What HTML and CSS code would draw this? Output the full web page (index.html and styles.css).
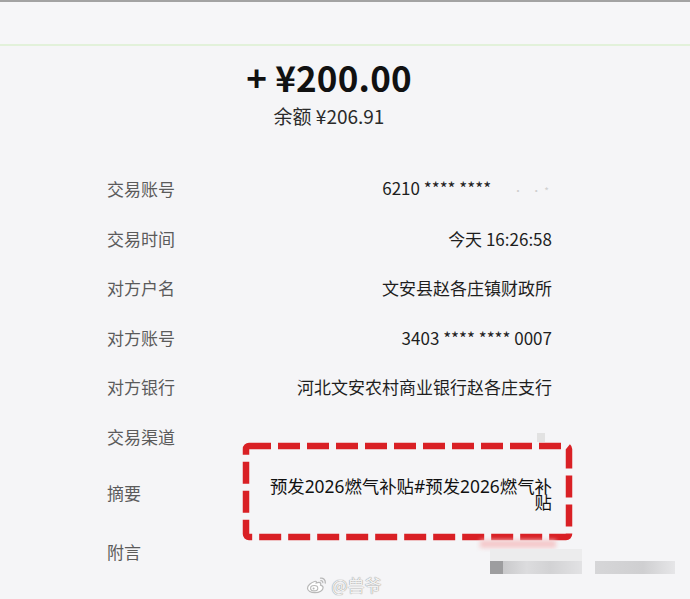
FILE: index.html
```html
<!DOCTYPE html>
<html lang="zh-CN">
<head>
<meta charset="utf-8">
<title>交易详情</title>
<link rel="stylesheet" href="styles.css">
</head>
<body>
<div class="page">
  <header class="top-bar"></header>
  <section class="amount-block">
    <div class="amount">+ ¥200.00</div>
    <div class="balance">余额 ¥206.91</div>
  </section>
  <div class="details">
    <div class="row">
      <span class="label">交易账号</span>
      <span class="value">6210 **** ****<span class="masked">· ·*</span></span>
    </div>
    <div class="row">
      <span class="label">交易时间</span>
      <span class="value">今天 16:26:58</span>
    </div>
    <div class="row">
      <span class="label">对方户名</span>
      <span class="value">文安县赵各庄镇财政所</span>
    </div>
    <div class="row">
      <span class="label">对方账号</span>
      <span class="value">3403 **** **** 0007</span>
    </div>
    <div class="row">
      <span class="label">对方银行</span>
      <span class="value">河北文安农村商业银行赵各庄支行</span>
    </div>
    <div class="row">
      <span class="label">交易渠道</span>
      <span class="value"></span>
    </div>
    <div class="row row-summary">
      <span class="label">摘要</span>
      <span class="value value-wrap">预发2026燃气补贴#预发2026燃气补贴</span>
      <span class="mark-block"></span>
      <svg class="highlight" width="331" height="99" viewBox="0 0 331 99">
        <rect x="4" y="4" width="323" height="91" rx="3" fill="none" stroke="#d8151a" stroke-width="6.5" stroke-dasharray="22 7"/>
      </svg>
    </div>
    <div class="row row-note">
      <span class="label">附言</span>
      <span class="value"></span>
      <span class="mosaic mosaic-a"></span>
      <span class="mosaic mosaic-b"></span>
      <span class="mosaic mosaic-c"></span>
      <span class="mosaic mosaic-d"></span>
      <span class="mosaic mosaic-e"></span>
    </div>
  </div>
  <footer class="watermark">
    <svg class="weibo" width="22" height="18" viewBox="0 0 22 18">
      <path d="M8.5 5.5c-3.5 1-7 4-7 6.8 0 2.6 3.3 4.4 7.4 4.4 4.6 0 8.2-2.4 8.2-5 0-1.6-1.5-2.3-2.6-2.6.6-1.5.2-2.8-1.6-2.8-1 0-2.2.5-2.6.7.3-1.4-.2-2.2-1.8-1.5z" fill="#fff" stroke="#b8b8b8" stroke-width="1.2"/>
      <ellipse cx="8.2" cy="12.2" rx="3.6" ry="2.7" fill="none" stroke="#b8b8b8" stroke-width="1.1"/>
      <circle cx="7.6" cy="12.6" r="1" fill="#b8b8b8"/>
      <path d="M14.5 2.2c2.8-.4 5.2 1.8 4.8 4.8" fill="none" stroke="#b8b8b8" stroke-width="1.3" stroke-linecap="round"/>
      <path d="M14.8 4.6c1.3-.1 2.2.9 2 2.1" fill="none" stroke="#b8b8b8" stroke-width="1.2" stroke-linecap="round"/>
    </svg>
    <span class="wm-text">@兽爷</span>
  </footer>
</div>
</body>
</html>
```

FILE: styles.css
```css
html, body {
  margin: 0;
  padding: 0;
  background: #f5f5f7;
}

.page {
  width: 690px;
  height: 599px;
  overflow: hidden;
  font-family: "Noto Sans CJK SC", "Noto Sans", sans-serif;
  color: #1c1c1c;
}

.top-bar {
  height: 42px;
  border-top: 2px solid #a3a3a3;
  border-bottom: 2px solid #e2f1da;
  background: #f6f6f8;
}

.amount-block {
  display: flex;
  flex-direction: column;
  align-items: center;
  padding-right: 32px;
}

.amount {
  margin-top: 9px;
  font-size: 35px;
  line-height: 44px;
  font-weight: 700;
  color: #111;
  letter-spacing: 0.2px;
}

.balance {
  margin-top: 4px;
  font-size: 19px;
  line-height: 26px;
  color: #2a2a2a;
}

.details {
  margin-top: 35.5px;
  padding: 0 138px 0 107px;
}

.row {
  display: flex;
  align-items: center;
  justify-content: space-between;
  height: 49.5px;
  font-size: 17px;
  line-height: 24px;
}

.label {
  color: #5b5b5b;
  flex: none;
}

.value {
  color: #1e1e1e;
  text-align: right;
}

.masked {
  color: #cfcfcf;
  font-size: 10px;
  margin-left: 22px;
  letter-spacing: 3px;
}

.row-summary {
  position: relative;
  height: 62px;
}

.value-wrap {
  width: 284px;
  font-family: "Noto Sans", "Noto Sans CJK SC", sans-serif;
  font-size: 17.4px;
  line-height: 16px;
  word-break: break-all;
  padding-top: 3px;
  color: #111;
}

.highlight {
  position: absolute;
  left: 135px;
  top: -20px;
  filter: blur(0.6px);
  opacity: 0.95;
}

.mark-block {
  position: absolute;
  left: 430px;
  top: -29px;
  width: 8px;
  height: 9px;
  background: #e2e2e2;
}

.row-note {
  position: relative;
  height: 56px;
}

.mosaic {
  position: absolute;
}

.mosaic-a {
  left: 373px;
  top: 16px;
  width: 76px;
  height: 8px;
  background: #f4c9cb;
  filter: blur(2px);
}

.mosaic-b {
  left: 383px;
  top: 25px;
  width: 92px;
  height: 12px;
  background: #ececed;
}

.mosaic-c {
  left: 383px;
  top: 37px;
  width: 13px;
  height: 13px;
  background: #9d9d9f;
}

.mosaic-d {
  left: 396px;
  top: 37px;
  width: 79px;
  height: 13px;
  background: linear-gradient(90deg, #c9c9cb 0%, #dcdcde 30%, #d2d2d4 60%, #e2e2e4 100%);
}

.mosaic-e {
  left: 488px;
  top: 37px;
  width: 80px;
  height: 13px;
  background: linear-gradient(90deg, #d6d6d8 0%, #cfcfd1 60%, #e6e6e8 100%);
}

.watermark {
  display: flex;
  align-items: center;
  justify-content: center;
  gap: 3px;
  margin-top: -5px;
  padding-right: 2px;
}

.wm-text {
  font-size: 17px;
  line-height: 20px;
  color: #f2f2f2;
  text-shadow: 0 0 1px #9a9a9a, 0 0 1px #9a9a9a;
}
```
